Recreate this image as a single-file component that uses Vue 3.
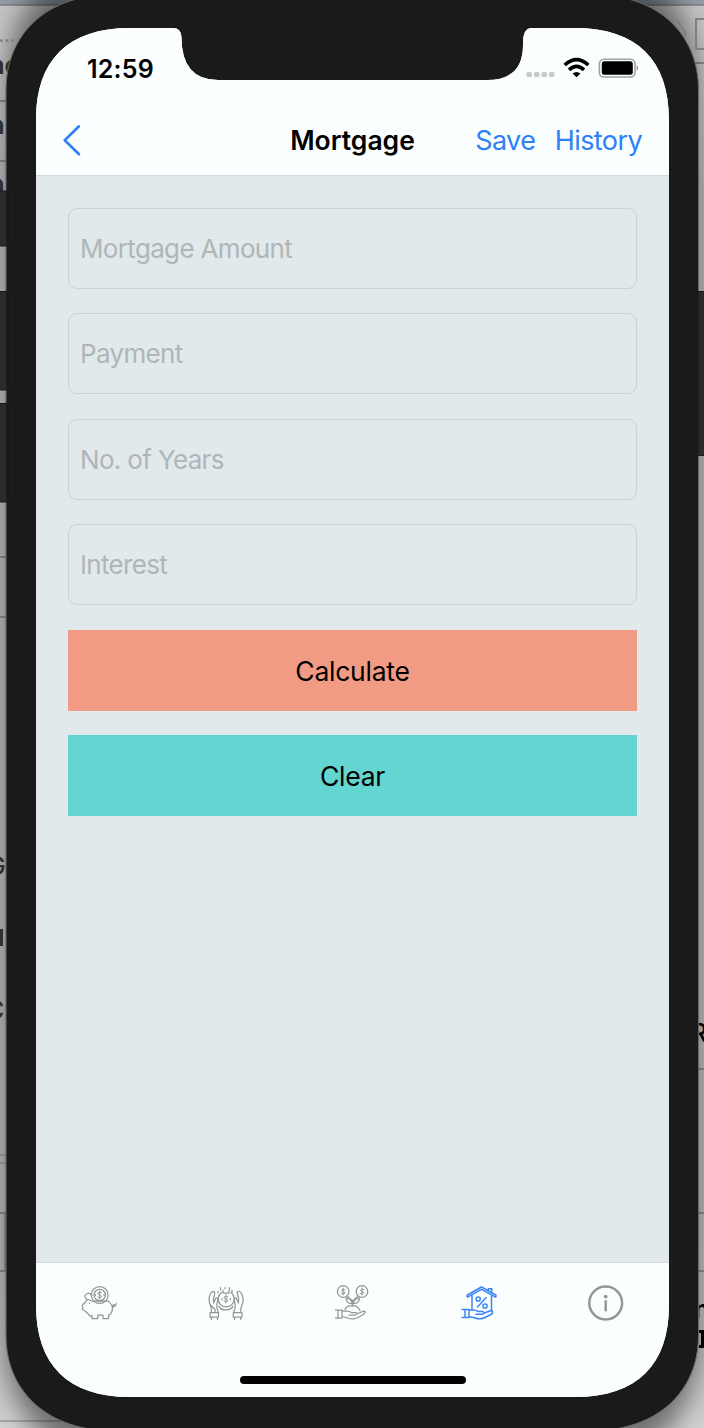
<script setup>
const fields = ['Mortgage Amount', 'Payment', 'No. of Years', 'Interest']
</script>

<template>
  <div class="stage">
    <svg class="desktop" width="704" height="1428" viewBox="0 0 704 1428">
      <defs>
        <linearGradient id="deskL" x1="0" y1="0" x2="0" y2="1">
          <stop offset="0" stop-color="#c4c4c4" /><stop offset=".05" stop-color="#c8c8c8" />
          <stop offset=".13" stop-color="#bcbcbc" /><stop offset=".85" stop-color="#bcbcbc" />
          <stop offset=".95" stop-color="#c2c2c2" /><stop offset="1" stop-color="#d0d0d0" />
        </linearGradient>
        <filter id="soft" x="-20%" y="-10%" width="140%" height="120%"><feGaussianBlur stdDeviation="13" /></filter>
      </defs>
      <rect width="704" height="1428" fill="url(#deskL)" />
      <rect width="704" height="5" fill="#929aa5" />
      <g stroke="#7c7c7c" stroke-width="1.5">
        <path d="M0 5H704" />
        <path d="M0 101H10M0 161H10M0 557H10M0 617H10M0 1213H10M0 1271H10M690 63H704M690 1069H704M690 1213H704M690 1271H704" />
        <path d="M0 1155H10M0 1163H10M0 1421H80" stroke="#999" />
      </g>
      <path d="M4 1214h4v56H4z" fill="#969696" />
      <path d="M50 -20 Q6 20 6 90 V1335 Q6 1415 60 1448 H644 Q698 1415 698 1335 V90 Q698 20 654 -20Z" fill="#000" opacity=".46" filter="url(#soft)" />
      <g fill="#828282"><circle cx="1.5" cy="40.5" r="1.5" /><circle cx="7" cy="40.5" r="1.5" /><circle cx="12.5" cy="40.5" r="1.5" /></g>
      <path d="M677 20L686 34L682 43M705 19H696V49H705" fill="none" stroke="#808080" stroke-width="2" />
      <g class="behind" fill="#303030">
        <text x="-11" y="74">nc</text>
        <text x="-11" y="134">n</text>
        <text x="-11" y="193">n</text>
        <text class="light" x="-13" y="875">G</text>
        <path d="M0 929h3v17H0z" />
        <text class="light" x="-14" y="1019">C</text>
        <text class="light dark" x="691" y="1042">R</text>
        <text class="dark" x="694" y="1318">n</text>
      </g>
      <path d="M699 1330h5v18h-5v-3h2v-12h-2z" fill="#000" />
    </svg>

    <main class="screen">
      <div class="status">
        <span class="time">12:59</span>
        <svg class="signals" width="116" height="24" viewBox="524 56 116 24">
          <g fill="#c9caca">
            <rect x="526.500" y="72" width="5.500" height="5" rx="1.500" /><rect x="534" y="72" width="5.500" height="5" rx="1.500" />
            <rect x="541.500" y="72" width="5.500" height="5" rx="1.500" /><rect x="549" y="72" width="5.500" height="5" rx="1.500" />
          </g>
          <g fill="none" stroke="#000" stroke-width="3.600">
            <path d="M564.700 65Q576.500 54.200 588.300 65" /><path d="M569 69.800Q576.500 63 584 69.800" />
          </g>
          <path d="M572.600 73.500Q576.500 70.300 580.400 73.500L576.500 77.300Z" />
          <rect x="599.400" y="59.200" width="35.600" height="17.800" rx="4.500" fill="none" stroke="#a1a3a3" stroke-width="1.600" />
          <rect x="601.800" y="61.300" width="31" height="13.500" rx="2.500" />
          <path d="M636.600 65.200Q640 68 636.600 70.900Z" fill="#929494" />
        </svg>
      </div>
      <header class="nav">
        <svg class="back" width="22" height="34" viewBox="0 0 22 34"><path d="M18 3.300L3.700 17.300L18 31.300" /></svg>
        <h1>Mortgage</h1>
        <div class="actions"><span class="save">Save</span><span class="history">History</span></div>
      </header>
      <section class="form">
        <div v-for="f in fields" :key="f" class="field"><span>{{ f }}</span></div>
        <div class="button calculate"><span>Calculate</span></div>
        <div class="button clear"><span>Clear</span></div>
      </section>
      <footer class="tabs">
        <svg viewBox="-1 0 60 55">
          <circle cx="29.700" cy="20" r="8.400" /><circle cx="29.700" cy="20" r="5.700" />
          <path d="M22 26H38C41 28 43 32 42.300 35.500Q41.500 38.500 38.500 40.500V43.500H33V40H27.800V43.500H22V41H19.500L18 38.500C15.500 37.500 16 35.500 12.500 34.500V29.500C15.500 28.500 15.500 25.500 18 24.500L22 26M17 25Q12.500 20 17.500 18.500Q20.500 18 22 20.500M42.500 32.500Q45.500 31 44 29.500Q42.500 29.500 43 31.500M44 31.500Q46 31 46.500 28.500M22 40V43M38.500 40V43" />
          <path class="dollar" d="M31.700 17.900Q28.300 16.200 27.900 18.400C27.700 20.500 31.600 19.500 31.600 21.700Q30.800 23.500 27.700 22M29.700 16V24" />
          <path d="M19.500 28v.5M25.500 19.500v1M34 19.500v1" />
        </svg>
        <svg viewBox="0 0 60 55">
          <path d="M19 37.500V34.500L14 29.500Q12 24 14.500 18.500Q16.500 15.500 18.500 17Q19.300 18 17.500 23V28L20 23Q22.500 22.500 21.500 26L20.800 29.500Q20.500 33 22.300 37.500M15.300 37.500V33.500L14 29.500" />
          <path d="M37.500 37.500Q39.800 33 39.200 29.500L38.300 25.500Q37.700 22.500 40 23L42.500 28V23L41 17.500Q43.500 15 45.500 18.500Q48.500 24 46 30L44.800 33.500V37.500" />
          <path d="M14 37.500H22.500V42H14ZM37.300 37.500H46V42H37.300ZM15.500 42.500V44.500M21.500 42.500V44.500M38.500 42.500V44.500M44.700 42.500V44.500" />
          <path d="M25.500 17.500A8 8 0 1 0 35 17.500M27 15V18H33V15M23 31.500A8.800 8.800 0 0 0 37 31.500M24.500 12.500V15M29 12.500V13.500M33.500 12.500V14.500M36 15V18M22 16.500V17.500M25 34.500h.5" />
          <path class="dollar" d="M31.800 21.900Q28.500 20.200 28.100 22.400C27.900 24.500 31.800 23.500 31.800 25.700Q31 27.500 27.900 26M30 20V28" />
          <path d="M26 23.500v1M34.500 23.500v1" />
        </svg>
        <svg viewBox="-1 0 60 55">
          <circle cx="20.200" cy="16.500" r="5.800" /><circle cx="39" cy="16.500" r="5.800" />
          <path d="M24 21L29.500 26V31M35.500 21L29.500 26M23 23Q28.500 23 29 28.500Q23.500 29 23 23M36.500 23Q31 23 30.500 28.500Q36 29 36.500 23M22 34.500Q23.500 30.700 29.500 30.700Q35 30.700 37 35.500" />
          <path d="M12.500 35H19V43H12.500M15 35V43M19 36H24Q26 36 28.500 37.500H33Q35.500 39.500 32 40H26M34.500 38.500L41 36.200Q43.500 36.500 41 39L35 42.500Q31 45 25 43L19 41.500" />
          <path class="dollar" d="M22 14.700Q19 13.300 18.700 15.200C18.700 17 22 16.200 22 18Q21 19.600 18.300 18.400M20.200 13V20M40.800 14.700Q37.800 13.300 37.500 15.200C37.500 17 40.800 16.200 40.800 18Q39.800 19.600 37.100 18.400M39 13V20" />
        </svg>
        <svg class="active" viewBox="-1 0 60 55">
          <path d="M17.500 22.200L31.500 14.400L45.500 22.200Q46.700 21 45.800 20L31.500 12L17.300 20Q16.400 21.500 17.500 22.200M38.500 15.800V13.800H41.700V17.800M22 20V34M41.500 20.500V36" />
          <circle cx="28.200" cy="24" r="2.100" /><circle cx="35" cy="31" r="2.100" /><path d="M36.200 22.500L27.500 32" />
          <path d="M12 34.500H19V42.500H12M15 34.500V42.500M19 35H23Q25 34.500 28 36.500H33Q35.500 38.500 32 39.300H26M34.500 38L41 35.500Q43.500 35.500 42 39L36 42Q31 45 25 43L19 41.500" />
        </svg>
        <svg class="info" viewBox="1 0 60 55">
          <circle cx="30.700" cy="28" r="16.400" /><path d="M30.700 26.200V35.300" /><circle class="dot" cx="30.700" cy="21.600" r="1.900" />
        </svg>
      </footer>
      <div class="home"><i></i></div>
    </main>

    <svg class="frame" width="704" height="1428" viewBox="0 0 704 1428">
      <path fill="#1a1a1a" stroke="#686868" stroke-width="1" d="M6 90C6 36 45 -5 110 -5H595C660 -5 698.500 36 698.500 90V1335C698.500 1392 657 1431 590 1431H115C48 1431 6 1392 6 1335Z" />
      <path fill="#2b2b2b" stroke="#181818" d="M-2 191H6.500V246H-2ZM-2 291.500H6.500V390H-2ZM-2 403.500H6.500V502H-2ZM698 291.500H706V455.500H698Z" />
      <path stroke="#222" d="M12.500 192V244M12.500 295V388M12.500 407V500" />
    </svg>
  </div>
</template>

<style>
body { margin: 0; overflow: hidden; }
</style>

<style scoped>
.stage { position: relative; width: 704px; height: 1428px; overflow: hidden; box-sizing: border-box; padding: 28px 35px 31px 36px; font-family: Inter, "Liberation Sans", sans-serif; background: #aaa; }
.desktop, .frame { position: absolute; left: 0; top: 0; }
.desktop { z-index: 0; }
.frame { z-index: 1; }
.behind text { font: 700 25px Inter, sans-serif; }
.behind .light { font-weight: 500; }
.behind .dark { fill: #000; }
.screen {
  position: relative; z-index: 2; height: 1369px; display: flex; flex-direction: column; background: #e1e9eb;
  clip-path: path("M0 92C0 32 32 0 94 0H137Q145 0 145.500 9Q145.500 52 182 52H451Q487 52 487 17V13Q487.500 0 496 0H539C601 0 633 32 633 92V1277C633 1337 601 1369 539 1369H94C32 1369 0 1337 0 1277Z");
}
.status { height: 77px; box-sizing: border-box; padding: 28px 29px 0 51px; display: flex; justify-content: space-between; background: #fbfeff; }
.time { font-size: 25px; line-height: 26px; font-weight: 600; letter-spacing: .2px; }
.nav { height: 71px; box-sizing: border-box; border-bottom: 1.500px solid #d3dadb; background: #fbfeff; display: grid; grid-template-columns: 1fr auto 1fr; align-items: center; padding: 0 27px 0 25px; }
.back path { fill: none; stroke: #2e80f6; stroke-width: 2.600; stroke-linecap: round; stroke-linejoin: round; }
h1 { margin: 0; padding: 0 0 0 2px; font-size: 26.500px; line-height: 32px; font-weight: 600; letter-spacing: 0; }
.actions { display: flex; justify-content: flex-end; gap: 19.500px; padding-top: 2px; font-size: 27px; line-height: 32px; color: #2e80f6; letter-spacing: -.600px; }
.form { flex: 1; padding: 32px 32px 0; display: flex; flex-direction: column; gap: 24.300px; }
.field, .button { height: 81.100px; flex: none; box-sizing: border-box; display: flex; align-items: center; font-size: 26px; line-height: 32px; }
.field { border: 1px solid #cad3d4; border-radius: 9px; padding: 1px 0 0 11px; color: #afb6b8; letter-spacing: -.660px; }
.button { justify-content: center; padding-top: 1px; font-size: 26.500px; letter-spacing: -.260px; }
.calculate { background: #f29b84; }
.clear { background: #63d6d1; }
.tabs { height: 70px; border-top: 1.500px solid #d3dadb; background: #fbfeff; display: grid; grid-template-columns: repeat(5, 126.600px); justify-items: center; padding-top: 12px; box-sizing: border-box; }
.tabs svg { width: 60px; height: 55px; fill: none; stroke: #939798; stroke-width: 1.250; stroke-linejoin: round; stroke-linecap: round; }
.tabs .active { stroke: #3a86f7; stroke-width: 1.500; }
.tabs .dollar { stroke-width: 1; }
.tabs .info { stroke-width: 2.500; }
.tabs .dot { fill: #939798; stroke: none; }
.home { height: 65px; background: #fbfeff; display: flex; justify-content: center; align-items: flex-end; padding-bottom: 13px; box-sizing: border-box; }
.home i { width: 226px; height: 8px; border-radius: 4px; background: #000; }
</style>
